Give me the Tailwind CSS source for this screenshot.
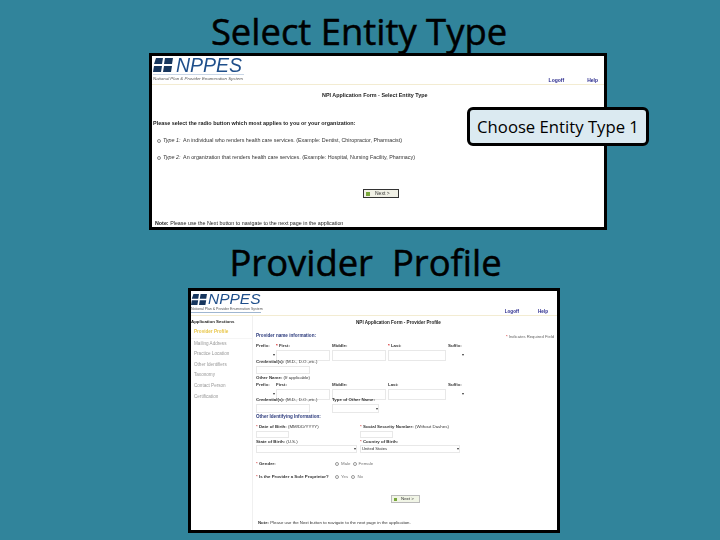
<!DOCTYPE html>
<html lang="en">
<head>
    <meta charset="UTF-8">
    <title>Select Entity Type</title>
    <script src="https://cdn.jsdelivr.net/npm/@tailwindcss/browser@4"></script>
</head>
<body class="bg-[#31849b]">
<div class="w-[720px] h-[540px] overflow-hidden flex flex-col font-['Liberation_Sans',sans-serif]">

    <!-- Slide title 1 -->
    <div class="h-[53px] flex items-start justify-center text-[36.4px] leading-[49px] [-webkit-text-stroke:0.5px_black] text-black font-['Open_Sans',sans-serif] pt-[7px] pr-[2px]">Select Entity Type</div>

    <!-- Screenshot 1 -->
    <div class="relative ml-[149px] w-[458px] h-[177px] border-[3px] border-black bg-white flex flex-col">
        <div class="blur-[0.4px] flex flex-col h-full">
            <!-- header -->
            <div class="h-[29px] border-b border-[#f3ecd2] flex justify-between shrink-0">
                <div class="pl-[1px] pt-[1px]">
                    <div class="flex items-center gap-[3px] h-[16px]">
                        <svg width="20" height="14" viewBox="0 0 20 14"><path d="M3 0h7l-1 6H1zM12 0h8l-1 6h-8zM1 8h8l-1 6H0zM11 8h8l-1 6h-8z" fill="#17365d"/></svg>
                        <span class="text-[19.5px] leading-[16px] italic text-[#1f4f8b]">NPPES</span>
                    </div>
                    <div class="mt-[1px] border-t border-[#c9d6e6] w-[91px] text-[4.4px] leading-[7px] italic text-[#555] whitespace-nowrap">National Plan &amp; Provider Enumeration System</div>
                </div>
                <div class="flex items-end gap-[23px] pr-[6px] pb-[1px] text-[5px] leading-[6px] font-bold text-[#2a2a8c]">
                    <span>Logoff</span><span>Help</span>
                </div>
            </div>
            <div class="h-[18px] pl-[170px] pt-[2px] flex items-center text-[5.4px] font-bold text-[#222] whitespace-nowrap">NPI Application Form - Select Entity Type</div>
            <div class="mt-[17px] pl-[1px] text-[5.45px] leading-[7px] font-bold text-[#222] whitespace-nowrap">Please select the radio button which most applies to you or your organization:</div>
            <div class="mt-[10px] pl-[5px] flex items-center gap-[2px] text-[5.35px] leading-[7px] text-[#333] whitespace-nowrap">
                <span class="w-[4px] h-[4px] rounded-full border-[0.5px] border-[#888]"></span><span><i>Type 1:</i>&nbsp; An individual who renders health care services. (Example: Dentist, Chiropractor, Pharmacist)</span>
            </div>
            <div class="mt-[10px] pl-[5px] flex items-center gap-[2px] text-[5.35px] leading-[7px] text-[#333] whitespace-nowrap">
                <span class="w-[4px] h-[4px] rounded-full border-[0.5px] border-[#888]"></span><span><i>Type 2:</i>&nbsp; An organization that renders health care services. (Example: Hospital, Nursing Facility, Pharmacy)</span>
            </div>
            <div class="mt-[28px] ml-[211px] w-[36px] h-[9px] border border-[#333] border-r-[1.5px] border-b-[1.5px] bg-[#f1f1e6] flex items-center gap-[5px] pl-[2px] text-[5px] text-[#333]">
                <span class="w-[4px] h-[4px] bg-[#7aa83c]"></span><span>Next &gt;</span>
            </div>
            <div class="mt-auto pl-[3px] text-[5.35px] leading-[7px] text-[#222] whitespace-nowrap"><b>Note:</b> Please use the Next button to navigate to the next page in the application</div>
        </div>
        <!-- callout -->
        <div class="absolute left-[315px] top-[51px] w-[182px] h-[39px] rounded-[6px] border-[3px] border-black bg-[#dbeaf1] flex items-center justify-center text-[16.7px] text-black font-['Open_Sans',sans-serif] whitespace-nowrap">Choose Entity Type 1</div>
    </div>

    <!-- Slide title 2 -->
    <div class="h-[58px] pl-[11px] flex items-start justify-center text-[36.4px] leading-[49px] [-webkit-text-stroke:0.5px_black] text-black font-['Open_Sans',sans-serif] pt-[8px] whitespace-pre">Provider  Profile</div>

    <!-- Screenshot 2 -->
    <div class="ml-[188px] w-[372px] h-[245px] border-[3px] border-black bg-white">
        <div class="blur-[0.4px] flex flex-col h-full overflow-hidden">
            <div class="h-[25px] border-b border-[#f3ecd2] flex justify-between shrink-0">
                <div class="pt-[1px]">
                    <div class="flex items-center gap-[1px] h-[14px]">
                        <svg width="16" height="11" viewBox="0 0 20 14" preserveAspectRatio="none"><path d="M3 0h7l-1 6H1zM12 0h8l-1 6h-8zM1 8h8l-1 6H0zM11 8h8l-1 6h-8z" fill="#17365d"/></svg>
                        <span class="text-[15.5px] leading-[14px] italic text-[#1f4f8b]">NPPES</span>
                    </div>
                    <div class="mt-[1px] border-b border-[#9fb6d0] w-[70px] text-[3.5px] leading-[5px] text-[#555] whitespace-nowrap">National Plan &amp; Provider Enumeration System</div>
                </div>
                <div class="flex items-end gap-[18px] pr-[9px] text-[4.6px] leading-[6px] font-bold text-[#2a2a8c]">
                    <span class="mr-[1px]">Logoff</span><span>Help</span>
                </div>
            </div>
            <div class="flex flex-1 min-h-0">
                <!-- sidebar -->
                <div class="w-[62px] shrink-0 border-r border-[#f0f0f0] flex flex-col text-[4.6px] leading-[10.6px] text-[#999] whitespace-nowrap pt-[1px]">
                    <div class="font-bold text-[#222] text-[4.4px] leading-[8px] mt-[1px] mb-[1px]">Application Sections</div>
                    <div class="pl-[3px] text-[#e8c64a] font-bold border-b border-[#f5f5f5]">Provider Profile</div>
                    <div class="pl-[3px]">Mailing Address</div>
                    <div class="pl-[3px]">Practice Location</div>
                    <div class="pl-[3px]">Other Identifiers</div>
                    <div class="pl-[3px]">Taxonomy</div>
                    <div class="pl-[3px]">Contact Person</div>
                    <div class="pl-[3px]">Certification</div>
                </div>
                <!-- form -->
                <div class="flex-1 min-w-0 pl-[3px] flex flex-col text-[4.4px] text-[#333] whitespace-nowrap">
                    <div class="h-[14px] pl-[100px] flex items-center font-bold text-[#222] text-[4.6px]">NPI Application Form - Provider Profile</div>
                    <div class="h-[8px] mt-[2px] flex items-center justify-between pr-[3px]">
                        <span class="font-bold text-[#2b3a7c] text-[4.6px]">Provider name information:</span>
                        <span class="text-[4.2px] text-[#666] pt-[2px]"><span class="text-[#c00]">*</span> Indicates Required Field</span>
                    </div>
                    <div class="h-[7px] mt-[3px] grid grid-cols-[20px_56px_56px_60px_16px] items-center font-bold">
                        <span>Prefix:</span><span><span class="text-[#c00]">*</span> First:</span><span>Middle:</span><span><span class="text-[#c00]">*</span> Last:</span><span>Suffix:</span>
                    </div>
                    <div class="h-[8px] grid grid-cols-[20px_56px_56px_60px_16px]">
                        <div class="border-b border-[#e8e8e8] mr-[1px] text-right text-[4px] leading-[10px]">▾</div>
                        <div class="border border-[#e8e8e8] mr-[2px]"></div><div class="border border-[#e8e8e8] mr-[2px]"></div><div class="border border-[#e8e8e8] mr-[2px]"></div>
                        <div class="text-right text-[4px] leading-[10px]">▾</div>
                    </div>
                    <div class="h-[7px] mt-[1px] flex items-center"><b>Credential(s):</b>&nbsp;(M.D., D.O.,etc.)</div>
                    <div class="h-[8px] w-[54px] border border-[#e8e8e8]"></div>
                    <div class="h-[7px] mt-[1px] flex items-center"><b>Other Name:</b>&nbsp;(If applicable)</div>
                    <div class="h-[7px] grid grid-cols-[20px_56px_56px_60px_16px] items-center font-bold">
                        <span>Prefix:</span><span>First:</span><span>Middle:</span><span>Last:</span><span>Suffix:</span>
                    </div>
                    <div class="h-[8px] grid grid-cols-[20px_56px_56px_60px_16px]">
                        <div class="border-b border-[#e8e8e8] mr-[1px] text-right text-[4px] leading-[10px]">▾</div>
                        <div class="border border-[#e8e8e8] mr-[2px]"></div><div class="border border-[#e8e8e8] mr-[2px]"></div><div class="border border-[#e8e8e8] mr-[2px]"></div>
                        <div class="text-right text-[4px] leading-[10px]">▾</div>
                    </div>
                    <div class="h-[7px] grid grid-cols-[76px_1fr] items-center">
                        <span><b>Credential(s):</b> (M.D., D.O.,etc.)</span><b>Type of Other Name:</b>
                    </div>
                    <div class="h-[8px] grid grid-cols-[76px_47px]">
                        <div class="w-[54px] border border-[#e8e8e8]"></div>
                        <div class="border border-[#e8e8e8] text-right text-[4px] leading-[7px]">▾</div>
                    </div>
                    <div class="h-[7px] mt-[2px] flex items-center font-bold text-[#2b3a7c] text-[4.6px]">Other Identifying Information:</div>
                    <div class="h-[7px] mt-[3px] grid grid-cols-[104px_1fr] items-center">
                        <span><span class="text-[#c00]">*</span> <b>Date of Birth:</b> (MM/DD/YYYY)</span>
                        <span><span class="text-[#c00]">*</span> <b>Social Security Number:</b> (Without Dashes)</span>
                    </div>
                    <div class="h-[7px] grid grid-cols-[104px_1fr] grid-rows-[7px]">
                        <div class="w-[33px] border border-[#e8e8e8]"></div><div class="w-[33px] border border-[#e8e8e8]"></div>
                    </div>
                    <div class="h-[6px] mt-[1px] grid grid-cols-[104px_1fr] items-center">
                        <span><b>State of Birth:</b> (U.S.)</span><span><span class="text-[#c00]">*</span> <b>Country of Birth:</b></span>
                    </div>
                    <div class="h-[7px] grid grid-cols-[104px_100px]">
                        <div class="w-[101px] border border-[#e8e8e8] text-right text-[4px] leading-[6px]">▾</div>
                        <div class="border border-[#e8e8e8] flex justify-between items-center pl-[1px] text-[4.2px]"><span>United States</span><span class="text-[4px]">▾</span></div>
                    </div>
                    <div class="h-[7px] mt-[9px] flex items-center">
                        <span class="w-[79px]"><span class="text-[#c00]">*</span> <b>Gender:</b></span>
                        <span class="flex items-center gap-[2px] text-[#777]"><span class="w-[4px] h-[4px] rounded-full border-[0.5px] border-[#999]"></span>Male<span class="w-[4px] h-[4px] rounded-full border-[0.5px] border-[#999]"></span>Female</span>
                    </div>
                    <div class="h-[7px] mt-[6px] flex items-center">
                        <span class="w-[79px]"><span class="text-[#c00]">*</span> <b>Is the Provider a Sole Proprietor?</b></span>
                        <span class="flex items-center gap-[2px] text-[#777]"><span class="w-[4px] h-[4px] rounded-full border-[0.5px] border-[#999]"></span>Yes&nbsp;<span class="w-[4px] h-[4px] rounded-full border-[0.5px] border-[#999]"></span>No</span>
                    </div>
                    <div class="mt-[14px] ml-[135px] w-[29px] h-[8px] border border-[#bbb] bg-[#f1f5e6] flex items-center gap-[4px] pl-[2px] text-[4.4px]">
                        <span class="w-[3px] h-[3px] bg-[#7aa83c]"></span><span>Next &gt;</span>
                    </div>
                    <div class="mt-auto pb-[4px] pl-[2px] text-[4.3px] leading-[6px]"><b>Note:</b> Please use the Next button to navigate to the next page in the application.</div>
                </div>
            </div>
        </div>
    </div>
</div>
</body>
</html>
